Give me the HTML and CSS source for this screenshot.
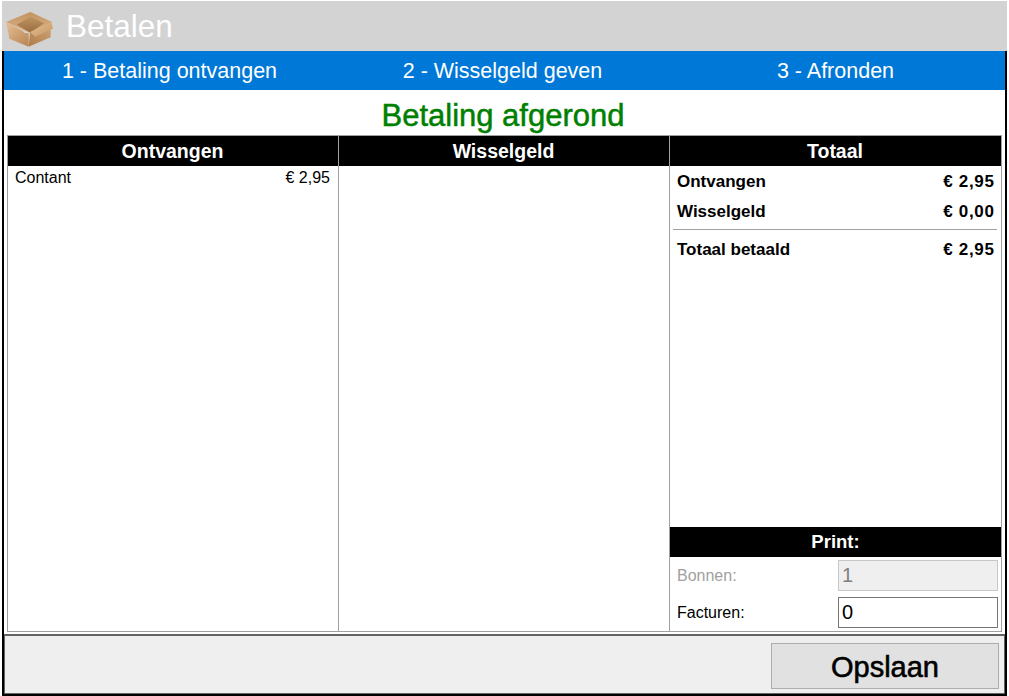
FILE: index.html
```html
<!DOCTYPE html>
<html lang="nl">
<head>
<meta charset="utf-8">
<title>Betalen</title>
<link rel="stylesheet" href="styles.css">
</head>
<body>
<div class="window">
  <header class="titlebar">
    <svg class="box-icon" width="54" height="42" viewBox="0 0 162 126">
      <defs>
        <linearGradient id="flapTop" x1="0" y1="0" x2="0" y2="1"><stop offset="0" stop-color="#c2925f"/><stop offset="1" stop-color="#dcb589"/></linearGradient>
        <linearGradient id="faceLeft" x1="0" y1="0" x2="1" y2="1"><stop offset="0" stop-color="#dcb287"/><stop offset="1" stop-color="#b58350"/></linearGradient>
        <linearGradient id="faceRight" x1="0" y1="1" x2="1" y2="0"><stop offset="0" stop-color="#b07d4a"/><stop offset="1" stop-color="#cda071"/></linearGradient>
        <linearGradient id="flapFront" x1="0" y1="0" x2="1" y2="1"><stop offset="0" stop-color="#e6c29a"/><stop offset="1" stop-color="#c6945f"/></linearGradient>
        <linearGradient id="inner" x1="0" y1="0" x2="0" y2="1"><stop offset="0" stop-color="#c0935f"/><stop offset="1" stop-color="#9a6d41"/></linearGradient>
      </defs>
      <path d="M12 42 L85 12 L150 42 L85 76 Z" fill="url(#flapTop)"/>
      <path d="M44 50 L85 26 L126 46 L85 74 Z" fill="url(#inner)"/>
      <path d="M18 70 L80 76 L80 116 L22 92 Z" fill="url(#faceLeft)"/>
      <path d="M80 116 L146 88 L146 58 L84 74 Z" fill="url(#faceRight)"/>
      <path d="M12 42 L62 68 L74 84 L18 72 Z" fill="url(#flapFront)"/>
      <path d="M84 72 L148 42 L153 62 L100 86 Z" fill="url(#flapFront)"/>
    </svg>
    <span class="title">Betalen</span>
  </header>
  <div class="frame">
    <nav class="steps">
      <div class="step">1 - Betaling ontvangen</div>
      <div class="step">2 - Wisselgeld geven</div>
      <div class="step">3 - Afronden</div>
    </nav>
    <main class="content">
      <h1 class="status">Betaling afgerond</h1>
      <div class="panels">
        <section class="panel">
          <h2 class="panel-head">Ontvangen</h2>
          <div class="pay-row"><span>Contant</span><span>€ 2,95</span></div>
        </section>
        <section class="panel">
          <h2 class="panel-head">Wisselgeld</h2>
        </section>
        <section class="panel">
          <h2 class="panel-head">Totaal</h2>
          <div class="totals">
            <div class="total-row"><span>Ontvangen</span><span class="amount">€ 2,95</span></div>
            <div class="total-row"><span>Wisselgeld</span><span class="amount">€ 0,00</span></div>
            <div class="total-row total-sum"><span>Totaal betaald</span><span class="amount">€ 2,95</span></div>
          </div>
          <div class="print">
            <h2 class="panel-head print-head">Print:</h2>
            <div class="print-row is-disabled">
              <label for="bonnen">Bonnen:</label>
              <input id="bonnen" class="field" type="text" value="1" disabled>
            </div>
            <div class="print-row">
              <label for="facturen">Facturen:</label>
              <input id="facturen" class="field" type="text" value="0">
            </div>
          </div>
        </section>
      </div>
    </main>
    <footer class="actions">
      <button class="save" type="button">Opslaan</button>
    </footer>
  </div>
</div>
</body>
</html>
```
FILE: styles.css
```css
* { box-sizing: border-box; }
html, body { margin: 0; padding: 0; background: #fff; }
body {
  width: 1009px;
  height: 696px;
  overflow: hidden;
  padding: 1px 2px 0;
  font-family: "Liberation Sans", Arial, sans-serif;
  color: #000;
}
.window {
  display: flex;
  flex-direction: column;
  height: 695px;
}
.titlebar {
  flex: none;
  height: 50px;
  background: #d3d3d3;
  display: flex;
  align-items: center;
}
.box-icon { flex: none; margin-top: 6px; }
.title {
  color: #fff;
  font-size: 31.5px;
  margin-left: 10px;
}
.frame {
  flex: 1;
  min-height: 0;
  display: flex;
  flex-direction: column;
  border: 2px solid #000;
  border-top: 0;
}
.steps {
  flex: none;
  height: 39px;
  background: #0078d7;
  color: #fff;
  display: grid;
  grid-template-columns: repeat(3, 1fr);
  padding-right: 2px;
  font-size: 21.5px;
  line-height: 41px;
}
.step { text-align: center; padding-right: 2px; }
.content {
  flex: 1;
  min-height: 0;
  display: flex;
  flex-direction: column;
  background: #fff;
  padding: 0 3px 2px;
}
.status {
  margin: 0;
  flex: none;
  height: 45px;
  line-height: 52px;
  padding-right: 3px;
  text-align: center;
  font-size: 31px;
  font-weight: normal;
  color: #008000;
  -webkit-text-stroke: 0.5px #008000;
}
.panels {
  flex: 1;
  min-height: 0;
  display: grid;
  grid-template-columns: 330px 331px 1fr;
  border: 1px solid #a0a0a0;
}
.panel {
  display: flex;
  flex-direction: column;
  min-width: 0;
  border-left: 1px solid #a0a0a0;
}
.panel:first-child { border-left: 0; }
.panel-head {
  margin: 0;
  flex: none;
  height: 30px;
  background: #000;
  color: #fff;
  font-size: 19.5px;
  font-weight: bold;
  line-height: 30px;
  padding-right: 1px;
  text-align: center;
}
.print-head { font-size: 18.5px; padding-right: 0; }
.pay-row, .total-row {
  display: flex;
  justify-content: space-between;
  padding: 0 7px;
}
.pay-row {
  font-size: 16px;
  line-height: 24px;
  height: 24px;
  padding-right: 8px;
}
.totals { flex: 1; }
.total-row {
  font-size: 17px;
  font-weight: bold;
  height: 30px;
  line-height: 32px;
}
.amount { letter-spacing: 0.7px; margin-right: -0.7px; }
.total-sum {
  margin: 3px 4px 0 3px;
  padding: 4px 3px 0 4px;
  height: 35px;
  border-top: 1px solid #a0a0a0;
}
.print { flex: none; }
.print-row {
  display: flex;
  justify-content: space-between;
  align-items: center;
  height: 37px;
  padding: 0 3px 0 7px;
  font-size: 16px;
}
.is-disabled { color: #a0a0a0; }
.field {
  width: 160px;
  height: 31px;
  padding: 0 3px;
  border: 1px solid #767676;
  background: #fff;
  color: #000;
  font: 20px "Liberation Sans", Arial, sans-serif;
  outline: 0;
  border-radius: 0;
}
.field:disabled {
  background: #efefef;
  border-color: #c8c8c8;
  color: #808080;
}
.actions {
  flex: none;
  height: 60px;
  background: #efefef;
  border: 1px solid #646464;
  border-top-width: 2px;
  display: flex;
  justify-content: flex-end;
  align-items: flex-end;
  padding: 0 5px 4px 0;
}
.save {
  width: 228px;
  height: 46px;
  background: #e1e1e1;
  border: 1px solid #adadad;
  font: 29px "Liberation Sans", Arial, sans-serif;
  line-height: 46px;
  color: #000;
  -webkit-text-stroke: 0.6px #000;
  padding: 0;
}
```
